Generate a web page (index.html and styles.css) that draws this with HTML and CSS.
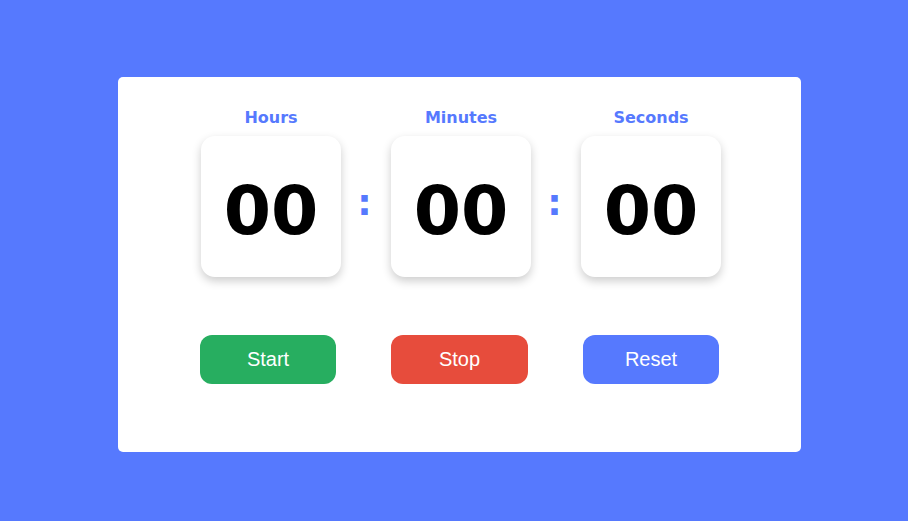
FILE: index.html
```html
<!DOCTYPE html>
<html lang="en">
<head>
<meta charset="utf-8">
<title>Timer</title>
<link rel="stylesheet" href="styles.css">
</head>
<body>
<div class="page">
  <div class="card">
    <div class="timer">
      <div class="unit">
        <div class="label">Hours</div>
        <div class="box">00</div>
      </div>
      <div class="colon">:</div>
      <div class="unit">
        <div class="label">Minutes</div>
        <div class="box">00</div>
      </div>
      <div class="colon">:</div>
      <div class="unit">
        <div class="label">Seconds</div>
        <div class="box">00</div>
      </div>
    </div>
    <div class="buttons">
      <button class="btn btn-start">Start</button>
      <button class="btn btn-stop">Stop</button>
      <button class="btn btn-reset">Reset</button>
    </div>
  </div>
</div>
</body>
</html>
```

FILE: styles.css
```css
html, body {
  margin: 0;
  padding: 0;
  background: #5679fe;
}
.page {
  padding: 77px 107px 0 118px;
  height: 521px;
  box-sizing: border-box;
}
.card {
  width: 683px;
  height: 375px;
  background: #fff;
  border-radius: 5px;
  box-sizing: border-box;
  padding-top: 31px;
}
.timer {
  display: flex;
  justify-content: center;
  padding-left: 3px;
}
.unit {
  width: 140px;
  display: flex;
  flex-direction: column;
  align-items: center;
}
.label {
  font-family: "DejaVu Sans", sans-serif;
  font-weight: bold;
  font-size: 16px;
  line-height: 19px;
  color: #5679fe;
  margin-bottom: 9px;
}
.box {
  width: 140px;
  height: 141px;
  box-sizing: border-box;
  padding-top: 7px;
  border-radius: 14px;
  background: #fff;
  box-shadow: 0 4px 10px rgba(0, 0, 0, 0.2);
  display: flex;
  align-items: center;
  justify-content: center;
  font-family: "DejaVu Sans", sans-serif;
  font-weight: bold;
  font-size: 68px;
  color: #000;
}
.colon {
  width: 50px;
  height: 141px;
  align-self: flex-end;
  display: flex;
  align-items: center;
  justify-content: center;
  padding-bottom: 8px;
  padding-right: 3px;
  box-sizing: border-box;
  font-family: "DejaVu Sans", sans-serif;
  font-weight: bold;
  font-size: 36px;
  color: #5679fe;
}
.buttons {
  display: flex;
  justify-content: center;
  gap: 55px;
  margin-top: 58px;
}
.btn {
  width: 136.5px;
  height: 49px;
  border: none;
  border-radius: 12px;
  color: #fff;
  font-family: "Liberation Sans", Arial, sans-serif;
  font-size: 20px;
  padding: 0;
  cursor: pointer;
}
.btn-start { background: #27ae60; }
.btn-stop { background: #e74c3c; }
.btn-reset { background: #5679fe; }
```
